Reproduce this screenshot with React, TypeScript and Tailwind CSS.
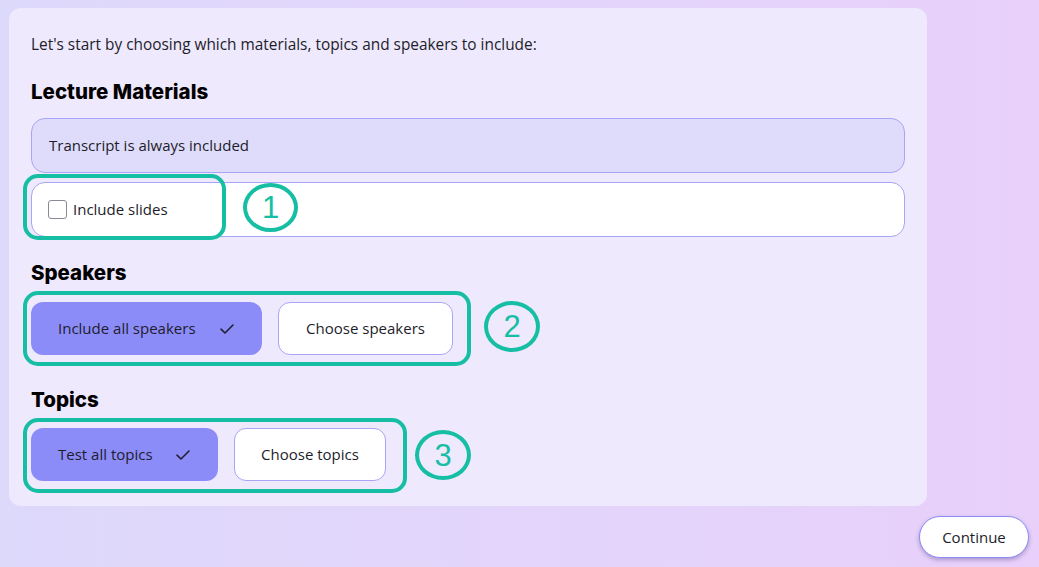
import type { FC, ReactNode } from "react";

const body = { fontFamily: "'Open Sans', Lato, sans-serif" };
const heading = { fontFamily: "Inter, 'Noto Sans', sans-serif" };

const Check: FC = () => (
  <svg width="14" height="10" viewBox="0 0 14 10" fill="none" className="shrink-0">
    <path d="M1 5.2 L5 9 L13 1" stroke="#1f1f2e" strokeWidth="1.6" strokeLinecap="round" strokeLinejoin="round" />
  </svg>
);

// teal callout ring + numbered bubble drawn over the content
const Callout: FC<{ n: string; ring: string; bubble: string; children: ReactNode }> = ({ n, ring, bubble, children }) => (
  <div className="relative w-fit">
    {children}
    <div className={`pointer-events-none absolute rounded-[15px] border-[4px] border-[#16bea4] ${ring}`} />
    <div
      className={`pointer-events-none absolute flex items-center justify-center rounded-[50%] border-[4px] border-[#16bea4] text-[31px] leading-none text-[#16bea4] ${bubble}`}
      style={{ fontFamily: "'Liberation Sans', Arial, sans-serif" }}
    >
      {n}
    </div>
  </div>
);

const ChoiceRow: FC<{ on: string; off: string; onW: string; offW: string }> = ({ on, off, onW, offW }) => (
  <div className="flex gap-4">
    <button className={`flex h-[53px] ${onW} items-center justify-between rounded-xl bg-[#8c8cf9] pl-[27px] pr-[28px] text-[15px] text-[#1d1d2b]`}>
      <span>{on}</span>
      <Check />
    </button>
    <button className={`flex h-[53px] ${offW} items-center justify-center rounded-xl border border-[#a8a4f6] bg-white text-[15px] text-[#1d1d2b]`}>
      {off}
    </button>
  </div>
);

const Heading: FC<{ children: ReactNode; className: string }> = ({ children, className }) => (
  <h2 className={`text-[20.5px] font-extrabold leading-[28px] text-black ${className}`} style={heading}>
    {children}
  </h2>
);

export default function App() {
  return (
    <div
      className="flex h-[567px] w-[1039px] flex-col items-start overflow-hidden bg-gradient-to-r from-[#ddd9fb] to-[#e8d0fa] pl-[9px] pt-[8px]"
      style={body}
    >
      <div className="h-[498px] w-[918px] rounded-xl bg-[#efe9fd] px-[22px] pt-[26px]">
        <p className="text-[15.4px] leading-[22px] text-[#1d1d2b]">
          Let's start by choosing which materials, topics and speakers to include:
        </p>

        <Heading className="mt-[22px]">Lecture Materials</Heading>
        <div className="mt-[12px] flex h-[55px] items-center rounded-[14px] border border-[#a8a4f6] bg-[#dedcfa] px-[17px] text-[15px] text-[#1d1d2b]">
          Transcript is always included
        </div>
        <div className="mt-[9px] flex h-[55px] items-center rounded-[14px] border border-[#a8a4f6] bg-white px-[16px] text-[15px] text-[#1d1d2b]">
          <Callout n="1" ring="-left-[25px] -top-[24px] h-[66px] w-[203px]" bubble="left-[195px] -top-[15px] h-[49px] w-[55px]">
            <div className="flex items-center gap-[6px]">
              <span className="h-[19px] w-[19px] rounded-[3px] border border-[#8a8a96] bg-white" />
              Include slides
            </div>
          </Callout>
        </div>

        <Heading className="mt-[22px]">Speakers</Heading>
        <div className="mt-[15px]">
          <Callout n="2" ring="-left-[8px] -top-[11px] -bottom-[11px] -right-[18px]" bubble="left-full ml-[31px] -top-[1px] h-[51px] w-[56px]">
            <ChoiceRow on="Include all speakers" off="Choose speakers" onW="w-[231px]" offW="w-[175px]" />
          </Callout>
        </div>

        <Heading className="mt-[31px]">Topics</Heading>
        <div className="mt-[14px]">
          <Callout n="3" ring="-left-[8px] -top-[10px] -bottom-[12px] -right-[21px]" bubble="left-full ml-[29px] top-[2px] h-[50px] w-[56px]">
            <ChoiceRow on="Test all topics" off="Choose topics" onW="w-[187px]" offW="w-[152px]" />
          </Callout>
        </div>
      </div>

      <button className="ml-[910px] mt-[10px] h-[42px] w-[110px] rounded-full border border-[#8c8cf9] bg-white text-[15px] text-[#1d1d2b] shadow-[0_2px_4px_rgba(60,40,120,0.35)]">
        Continue
      </button>
    </div>
  );
}
